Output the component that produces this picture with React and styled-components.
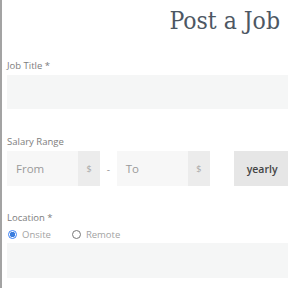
import React from 'react'
import styled, { createGlobalStyle } from 'styled-components'

const Global = createGlobalStyle`
  html, body {
    margin: 0;
    padding: 0;
    background: #fff;
  }
  body {
    font-family: "Open Sans", "Liberation Sans", sans-serif;
  }
`

function App() {
    return (
        <>
            <Global />
            <Page>
                <Title>Post a Job</Title>

                <Field $top={24}>
                    <Label>Job Title *</Label>
                    <TextInput $height={34} />
                </Field>

                <Field $top={27}>
                    <Label>Salary Range</Label>
                    <SalaryRow>
                        <InputGroup>
                            <Amount>From</Amount>
                            <Addon>$</Addon>
                        </InputGroup>
                        <Dash>-</Dash>
                        <InputGroup>
                            <Amount>To</Amount>
                            <Addon>$</Addon>
                        </InputGroup>
                        <PeriodButton>yearly</PeriodButton>
                    </SalaryRow>
                </Field>

                <Field $top={26}>
                    <Label>Location *</Label>
                    <Radios>
                        <RadioOption>
                            <Radio $checked />
                            <span>Onsite</span>
                        </RadioOption>
                        <RadioOption>
                            <Radio />
                            <span>Remote</span>
                        </RadioOption>
                    </Radios>
                    <TextInput $height={35} />
                </Field>
            </Page>
        </>
    )
}

export default App

const Page = styled.div`
    min-height: 288px;
    border-left: 2px solid #a3a3a3;
    padding-left: 5px;
    box-sizing: border-box;
    overflow: hidden;
`

const Title = styled.h1`
    margin: 0;
    padding: 6px 8px 0 0;
    text-align: right;
    font-family: "DejaVu Serif Condensed", "DejaVu Serif", serif;
    font-weight: normal;
    font-size: 24.5px;
    line-height: 30px;
    color: #4d5763;
`

const Field = styled.div`
    margin-top: ${props => props.$top}px;
    display: flex;
    flex-direction: column;
`

const Label = styled.div`
    font-size: 9.5px;
    line-height: 12px;
    color: #7d7d7d;
    margin-bottom: 3px;
`

const TextInput = styled.div`
    height: ${props => props.$height}px;
    background: #f5f6f6;
`

const SalaryRow = styled.div`
    display: flex;
    align-items: center;
    height: 35px;
`

const InputGroup = styled.div`
    display: flex;
    height: 100%;
`

const Amount = styled.div`
    width: 71px;
    background: #f7f7f7;
    display: flex;
    align-items: center;
    padding-left: 9px;
    box-sizing: border-box;
    font-size: 11.5px;
    color: #9a9a9a;
`

const Addon = styled.div`
    width: 22px;
    background: #ececec;
    display: flex;
    align-items: center;
    justify-content: center;
    font-size: 9px;
    color: #a8a8a8;
`

const Dash = styled.div`
    width: 19px;
    text-align: center;
    font-size: 10px;
    color: #999;
`

const PeriodButton = styled.div`
    margin-left: 24px;
    width: 60px;
    height: 100%;
    background: #e6e6e6;
    display: flex;
    align-items: center;
    padding-left: 13px;
    box-sizing: border-box;
    font-size: 10.5px;
    font-weight: 600;
    color: #444;
`

const Radios = styled.div`
    display: flex;
    align-items: center;
    gap: 21px;
    height: 14px;
    margin-bottom: 2px;
    padding-left: 1px;
`

const RadioOption = styled.label`
    display: flex;
    align-items: center;
    gap: 5px;
    font-size: 9.5px;
    color: #a3a3a3;
`

const Radio = styled.span`
    width: 9px;
    height: 9px;
    border-radius: 50%;
    box-sizing: border-box;
    border: 1px solid ${props => (props.$checked ? '#3b82f6' : '#777')};
    background: ${props => (props.$checked ? 'radial-gradient(circle, #3b7ddd 0 2.5px, #fff 3px)' : '#fff')};
`
